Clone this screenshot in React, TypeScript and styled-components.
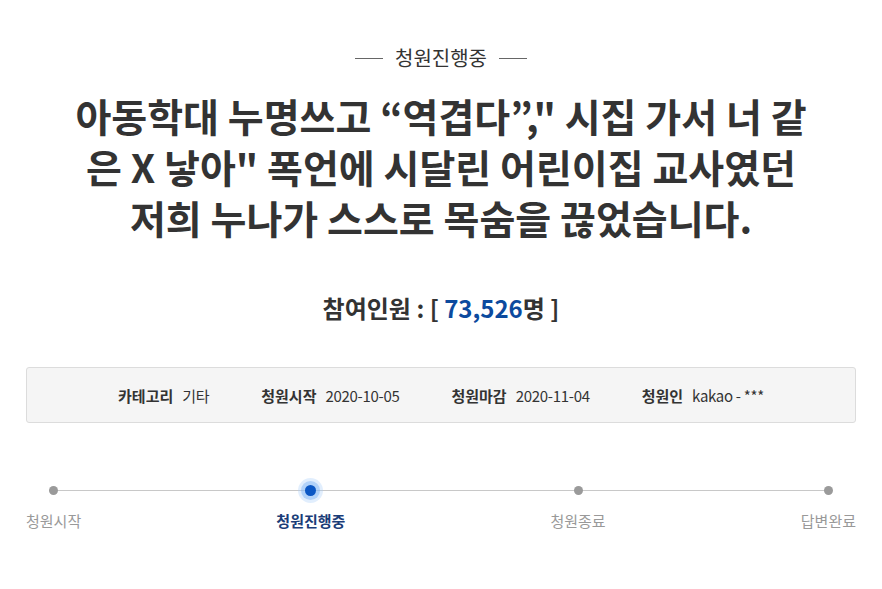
import styled, { createGlobalStyle, css } from 'styled-components';

const GlobalStyle = createGlobalStyle`
    html, body {
        margin: 0;
        padding: 0;
        background: #fff;
    }
    body {
        font-family: 'Noto Sans CJK KR', 'Noto Sans', sans-serif;
        color: #333;
    }
`;

const Page = styled.div`
    width: 882px;
    padding: 42px 26px 0;
    box-sizing: border-box;
    display: flex;
    flex-direction: column;
    align-items: stretch;
`;

const StatusLabel = styled.div`
    display: flex;
    justify-content: center;
    align-items: center;
    gap: 12px;
    font-size: 20px;
    line-height: 32px;
    color: #333;

    &::before,
    &::after {
        content: '';
        width: 28px;
        height: 1px;
        background: #666;
    }
`;

const Title = styled.h1`
    margin: 16px 0 0;
    text-align: center;
    font-size: 39px;
    line-height: 51px;
    font-weight: 700;
    color: #333;
    letter-spacing: 0;
`;

const Participants = styled.div`
    margin-top: 50px;
    text-align: center;
    font-size: 24px;
    line-height: 30px;
    font-weight: 700;
    color: #333;
`;

const Count = styled.span`
    color: #0c4a9e;
`;

const InfoBox = styled.div`
    margin-top: 44px;
    height: 56px;
    box-sizing: border-box;
    background: #f5f5f5;
    border: 1px solid #dcdcdc;
    border-radius: 3px;
    display: flex;
    justify-content: center;
    align-items: center;
    gap: 52px;
`;

const InfoItem = styled.div`
    display: flex;
    align-items: center;
    gap: 9px;
    font-size: 15px;
    color: #333;
`;

const InfoLabel = styled.span`
    font-weight: 700;
`;

const InfoValue = styled.span`
    font-weight: 400;
    letter-spacing: -0.3px;
`;

const Track = styled.div`
    position: relative;
    margin-top: 57px;
    display: flex;
    justify-content: space-between;

    &::before {
        content: '';
        position: absolute;
        left: 26px;
        right: 27px;
        top: 10px;
        height: 1px;
        background: #c8c8c8;
    }
`;

const Step = styled.div<{ $shift?: number }>`
    position: relative;
    display: flex;
    flex-direction: column;
    align-items: center;
    margin-right: ${({ $shift }) => $shift ?? 0}px;
`;

const DotWrap = styled.div`
    width: 21px;
    height: 21px;
    display: flex;
    align-items: center;
    justify-content: center;
`;

const Dot = styled.span<{ $active?: boolean }>`
    width: 9px;
    height: 9px;
    border-radius: 50%;
    background: #9a9a9a;
    ${({ $active }) =>
        $active &&
        css`
            width: 11px;
            height: 11px;
            background: #0b57c4;
            box-shadow: 0 0 0 4px rgba(120, 175, 245, 0.45),
                0 0 0 7px rgba(170, 205, 250, 0.35);
        `}
`;

const StepLabel = styled.span<{ $active?: boolean }>`
    margin-top: 9px;
    font-size: 15px;
    line-height: 22px;
    color: #999;
    ${({ $active }) =>
        $active &&
        css`
            color: #1b3d78;
            font-weight: 700;
        `}
`;

const info = [
    { label: '카테고리', value: '기타' },
    { label: '청원시작', value: '2020-10-05' },
    { label: '청원마감', value: '2020-11-04' },
    { label: '청원인', value: 'kakao - ***' },
];

const steps = ['청원시작', '청원진행중', '청원종료', '답변완료'];
const current = 1;

export default function App() {
    return (
        <>
            <GlobalStyle />
            <Page>
                <StatusLabel>청원진행중</StatusLabel>
                <Title>
                    아동학대 누명쓰고 “역겹다”," 시집 가서 너 같
                    <br />은 X 낳아" 폭언에 시달린 어린이집 교사였던
                    <br />
                    저희 누나가 스스로 목숨을 끊었습니다.
                </Title>
                <Participants>
                    참여인원 : [ <Count>73,526</Count>명 ]
                </Participants>
                <InfoBox>
                    {info.map(item => (
                        <InfoItem key={item.label}>
                            <InfoLabel>{item.label}</InfoLabel>
                            <InfoValue>{item.value}</InfoValue>
                        </InfoItem>
                    ))}
                </InfoBox>
                <Track>
                    {steps.map((s, i) => (
                        <Step key={s} $shift={i === 1 ? 10 : 0}>
                            <DotWrap>
                                <Dot $active={i === current} />
                            </DotWrap>
                            <StepLabel $active={i === current}>{s}</StepLabel>
                        </Step>
                    ))}
                </Track>
            </Page>
        </>
    );
}
